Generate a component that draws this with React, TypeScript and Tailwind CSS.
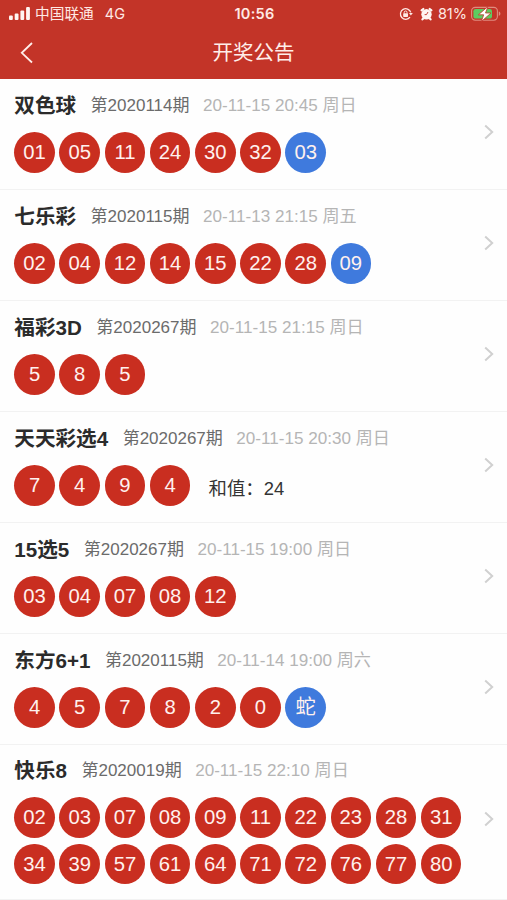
import clsx from 'clsx';

type Draw = {
  name: string;
  issue: string;
  date: string;
  balls: string[];
  blue?: string;
  sum?: string;
};

const draws: Draw[] = [
  { name: '双色球', issue: '2020114', date: '20-11-15 20:45 周日', balls: ['01', '05', '11', '24', '30', '32'], blue: '03' },
  { name: '七乐彩', issue: '2020115', date: '20-11-13 21:15 周五', balls: ['02', '04', '12', '14', '15', '22', '28'], blue: '09' },
  { name: '福彩3D', issue: '2020267', date: '20-11-15 21:15 周日', balls: ['5', '8', '5'] },
  { name: '天天彩选4', issue: '2020267', date: '20-11-15 20:30 周日', balls: ['7', '4', '9', '4'], sum: '24' },
  { name: '15选5', issue: '2020267', date: '20-11-15 19:00 周日', balls: ['03', '04', '07', '08', '12'] },
  { name: '东方6+1', issue: '2020115', date: '20-11-14 19:00 周六', balls: ['4', '5', '7', '8', '2', '0'], blue: '蛇' },
  {
    name: '快乐8',
    issue: '2020019',
    date: '20-11-15 22:10 周日',
    balls: ['02', '03', '07', '08', '09', '11', '22', '23', '28', '31', '34', '39', '57', '61', '64', '71', '72', '76', '77', '80'],
  },
];

const StatusBar = () => (
  <div className="flex h-7 items-center justify-between pr-[6px] pl-[9px] text-[14.7px] text-[#ffe9e4]">
    <div className="flex w-[180px] items-center">
      <svg width="22" height="14" viewBox="0 0 22 14" fill="#fff5f2">
        <rect x="0" y="8.6" width="3.8" height="4.4" rx="1" />
        <rect x="5.7" y="6.4" width="3.8" height="6.6" rx="1" />
        <rect x="11.4" y="3.4" width="3.8" height="9.6" rx="1" />
        <rect x="17.1" y="0" width="3.8" height="13" rx="1" />
      </svg>
      <span className="ml-1">中国联通</span>
      <span className="ml-[11px] font-[Inter,sans-serif] text-[14.5px]">4G</span>
    </div>
    <span className="mr-px font-[Inter,sans-serif] text-[14.5px] font-semibold tracking-[0.3px]">10:56</span>
    <div className="flex w-[180px] items-center justify-end">
      <svg width="14" height="14" viewBox="0 0 14 14" fill="none" stroke="#ffe9e4" strokeWidth="1.3">
        <path d="M11 10.2A5.3 5.3 0 1 1 11.8 5.4" />
        <path d="M10 5.9h3.8L11.9 8.6Z" fill="#ffe9e4" stroke="none" />
        <rect x="4.2" y="6.3" width="4.8" height="3.6" rx="0.6" fill="#ffe9e4" stroke="none" />
        <path d="M5.2 6.5V5.4a1.4 1.4 0 0 1 2.8 0v1.1" strokeWidth="1" />
      </svg>
      <svg className="ml-[7px]" width="13" height="14" viewBox="0 0 13 14">
        <circle cx="6.5" cy="7.3" r="5.2" fill="#fff5f2" />
        <path d="M1.6 3.4 3.3 2M11.4 3.4 9.7 2M2.4 12.4l1-1.2M10.6 12.4l-1-1.2" stroke="#fff5f2" strokeWidth="2.2" strokeLinecap="round" />
        <path d="M8 5 6.5 7.6H4.6" fill="none" stroke="#c33428" strokeWidth="0.9" />
      </svg>
      <span className="ml-[5px] font-[Inter,sans-serif] text-[14.5px]">81%</span>
      <svg className="ml-1" width="30" height="16" viewBox="0 0 30 16">
        <rect x="0.6" y="1.4" width="25.8" height="12.8" rx="3.6" fill="none" stroke="#e08b7f" strokeWidth="1.1" />
        <path d="M27.8 5.6v4.4c1-.3 1.6-1.2 1.6-2.2s-.6-1.9-1.6-2.2Z" fill="#e08b7f" />
        <rect x="2.4" y="3" width="18.6" height="9.6" rx="2.2" fill="#5dcb60" />
        <path d="M17 .4 7.4 8.8h5.3l-2.4 6.8L20 7h-5.5Z" fill="#fff" stroke="#c33428" strokeWidth="0.8" />
      </svg>
    </div>
  </div>
);

const Ball = ({ value, blue }: { value: string; blue?: boolean }) => (
  <span
    className={clsx(
      'flex size-[40.5px] items-center justify-center rounded-full text-[20.3px] leading-none text-[#fff1ee]',
      blue ? 'bg-[#3f7add]' : 'bg-[#c92e20]'
    )}
  >
    {value}
  </span>
);

const DrawRow = ({ draw }: { draw: Draw }) => {
  const long = draw.balls.length > 10;

  return (
    <li
      className={clsx(
        'flex items-center justify-between border-b border-[#f2f2f2] pr-[13.5px] pl-[14.3px]',
        long ? 'h-[155px] pb-[6px]' : 'h-[111px] pb-[4px]'
      )}
    >
      <div className={clsx('flex flex-col self-start', long ? 'pt-3' : 'pt-[13px]')}>
        <div className="flex h-7 items-center whitespace-nowrap">
          <h2 className="text-[20.6px] font-bold text-[#2b2b2b]">{draw.name}</h2>
          <span className="ml-[14.5px] text-[17px] text-[#6b6b6b]">第{draw.issue}期</span>
          <span className="ml-[13.5px] text-[17.1px] text-[#b5b5b5]">{draw.date}</span>
        </div>
        <div className="mt-[12.3px] flex w-[452px] flex-wrap gap-x-[4.7px] gap-y-[5.8px]">
          {draw.balls.map((n, i) => (
            <Ball key={i} value={n} />
          ))}
          {draw.blue && <Ball value={draw.blue} blue />}
          {draw.sum && <span className="mt-[9.5px] ml-[13.5px] text-[18.4px] text-[#333]">和值：{draw.sum}</span>}
        </div>
      </div>
      <svg className="-ml-4 shrink-0" width="10" height="16" viewBox="0 0 10 16" fill="none" stroke="#d0d0d0" strokeWidth="2">
        <path d="M1.2 1.6 8.2 8 1.2 14.4" />
      </svg>
    </li>
  );
};

const App = () => {
  return (
    <div className="h-[900px] w-[507px] overflow-hidden bg-[#fefefe] font-['Liberation_Sans','Noto_Sans_CJK_SC',sans-serif]">
      <header className="h-[79px] bg-[#c33428]">
        <StatusBar />
        <nav className="flex h-[51px] items-center pb-px">
          <button className="w-[60px] pl-5" aria-label="返回">
            <svg width="14" height="22" viewBox="0 0 14 22" fill="none" stroke="#ffeeea" strokeWidth="1.8">
              <path d="M12 1 1.8 10.8 12 20.5" />
            </svg>
          </button>
          <h1 className="mr-[60px] flex-1 text-center text-[20.5px] text-[#ffeeea]">开奖公告</h1>
        </nav>
      </header>
      <ul>
        {draws.map((d) => (
          <DrawRow key={d.name} draw={d} />
        ))}
      </ul>
    </div>
  );
};

export default App;
